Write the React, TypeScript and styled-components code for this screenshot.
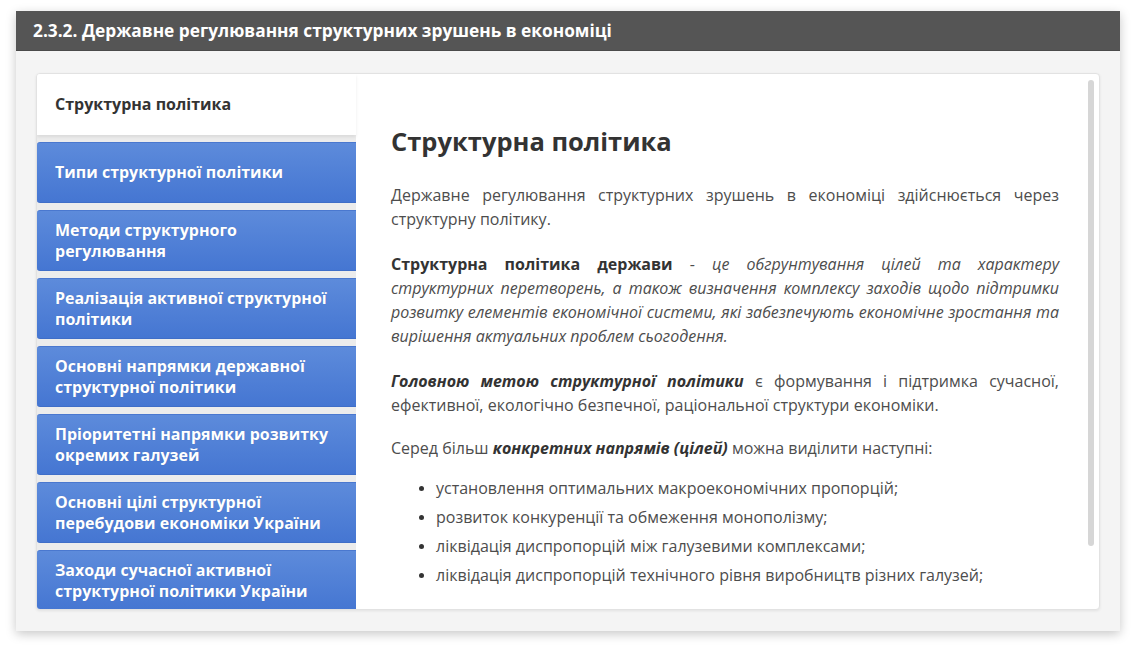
import React from "react";
import styled, { createGlobalStyle } from "styled-components";

const Global = createGlobalStyle`
  html, body { margin: 0; padding: 0; background: #ffffff; }
  body { font-family: "Open Sans", "Noto Sans", sans-serif; }
  * { box-sizing: border-box; }
`;

const Page = styled.div`
  width: 1136px;
  height: 653px;
  padding: 11px 16px 0 16px;
  background: #ffffff;
`;

const Card = styled.div`
  width: 1104px;
  height: 620px;
  display: flex;
  flex-direction: column;
  box-shadow: 0 3px 10px rgba(0, 0, 0, 0.22);
  background: #f4f4f4;
`;

const Header = styled.div`
  height: 40px;
  flex: none;
  background: #555555;
  display: flex;
  align-items: center;
  padding-left: 17px;
  color: #ffffff;
  font-weight: 700;
  font-size: 17.3px;
  border-bottom: 1px solid #4a4a4a;
`;

const Body = styled.div`
  flex: 1;
  min-height: 0;
  padding: 22px 20px 21px 20px;
  display: flex;
`;

const Panel = styled.div`
  flex: 1;
  height: 537px;
  display: flex;
  background: #ffffff;
  border: 1px solid #e2e2e2;
  border-radius: 4px;
  box-shadow: 0 1px 3px rgba(0, 0, 0, 0.08);
  overflow: hidden;
  position: relative;
`;

const TabColumn = styled.div`
  width: 319px;
  flex: none;
  display: flex;
  flex-direction: column;
  gap: 7px;
  background: #ececec;
`;

const ActiveTab = styled.div`
  height: 61px;
  flex: none;
  background: #ffffff;
  display: flex;
  align-items: center;
  padding: 0 0 1px 18px;
  font-weight: 700;
  font-size: 16px;
  color: #333333;
  box-shadow: 0 2px 3px rgba(0, 0, 0, 0.08);
`;

const Tab = styled.div`
  height: 61px;
  flex: none;
  display: flex;
  align-items: center;
  padding: 0 14px 0 18px;
  background: linear-gradient(#5d8bdb, #4576d2);
  border-top: 1px solid #4a78cf;
  border-bottom: 1px solid #3f6ec8;
  border-radius: 3px 0 0 3px;
  color: #ffffff;
  font-weight: 700;
  font-size: 16px;
  line-height: 21px;
  text-shadow: 0 0 1px rgba(0, 0, 0, 0.15);
`;

const Content = styled.div`
  flex: 1;
  min-height: 0;
  padding: 51px 40px 0 35px;
  overflow: hidden;
  color: #4d4d4d;
  font-size: 16px;
  line-height: 24px;
`;

const Title = styled.h1`
  margin: 0 0 26px 0;
  font-size: 25.5px;
  line-height: 32px;
  font-weight: 700;
  color: #333333;
`;

const Para = styled.p<{ $gap?: number }>`
  margin: 0 0 ${(p) => (p.$gap ?? 21)}px 0;
  text-align: justify;
`;

const Strong = styled.b`
  font-weight: 700;
  color: #333333;
`;

const StrongItalic = styled.b`
  font-weight: 700;
  font-style: italic;
  color: #333333;
`;

const Em = styled.i`
  font-style: italic;
`;

const List = styled.ul`
  margin: 0;
  padding: 0 0 0 45px;
  list-style: disc;
`;

const Item = styled.li`
  line-height: 29px;
  &::marker { color: #333333; font-size: 14px; }
`;

const Thumb = styled.div`
  position: absolute;
  right: 5px;
  top: 6px;
  width: 6px;
  height: 466px;
  border-radius: 3px;
  background: #d6d6d6;
`;

const tabs = [
  "Типи структурної політики",
  "Методи структурного регулювання",
  "Реалізація активної структурної політики",
  "Основні напрямки державної структурної політики",
  "Пріоритетні напрямки розвитку окремих галузей",
  "Основні цілі структурної перебудови економіки України",
  "Заходи сучасної активної структурної політики України",
];

const items = [
  "установлення оптимальних макроекономічних пропорцій;",
  "розвиток конкуренції та обмеження монополізму;",
  "ліквідація диспропорцій між галузевими комплексами;",
  "ліквідація диспропорцій технічного рівня виробництв різних галузей;",
];

export default function App() {
  return (
    <Page>
      <Global />
      <Card>
        <Header>2.3.2. Державне регулювання структурних зрушень в економіці</Header>
        <Body>
          <Panel>
            <TabColumn>
              <ActiveTab>Структурна політика</ActiveTab>
              {tabs.map((t) => (
                <Tab key={t}>{t}</Tab>
              ))}
            </TabColumn>
            <Content>
              <Title>Структурна політика</Title>
              <Para>
                Державне регулювання структурних зрушень в економіці здійснюється через
                структурну політику.
              </Para>
              <Para>
                <Strong>Структурна політика держави</Strong> -{" "}
                <Em>
                  це обгрунтування цілей та характеру структурних перетворень, а також
                  визначення комплексу заходів щодо підтримки розвитку елементів економічної
                  системи, які забезпечують економічне зростання та вирішення актуальних
                  проблем сьогодення.
                </Em>
              </Para>
              <Para $gap={19}>
                <StrongItalic>Головною метою структурної політики</StrongItalic> є формування і
                підтримка сучасної, ефективної, екологічно безпечної, раціональної структури
                економіки.
              </Para>
              <Para $gap={14}>
                Серед більш <StrongItalic>конкретних напрямів (цілей)</StrongItalic> можна
                виділити наступні:
              </Para>
              <List>
                {items.map((i) => (
                  <Item key={i}>{i}</Item>
                ))}
              </List>
            </Content>
            <Thumb />
          </Panel>
        </Body>
      </Card>
    </Page>
  );
}
